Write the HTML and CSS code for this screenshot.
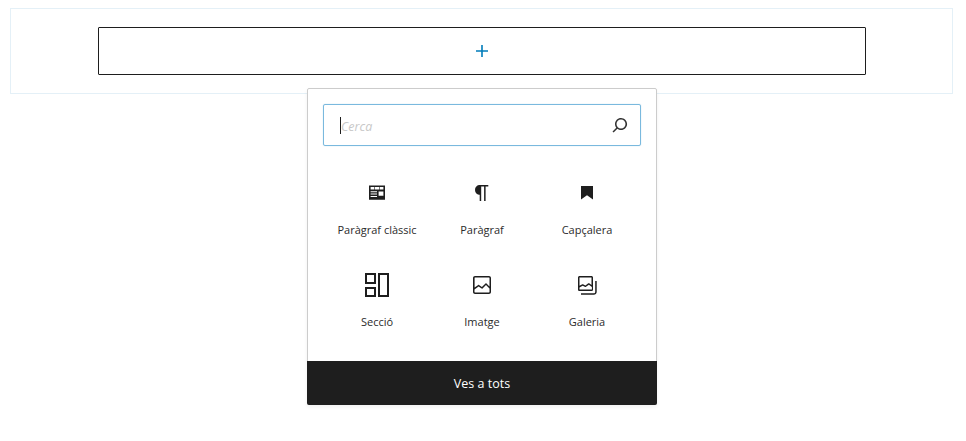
FILE: index.html
```html
<!DOCTYPE html>
<html lang="ca">
<head>
<meta charset="utf-8">
<title>Insereix un bloc</title>
<link rel="stylesheet" href="styles.css">
</head>
<body>
<div class="stage">
  <div class="block-outline">
    <button class="appender" type="button" aria-label="Afegeix un bloc">
      <svg class="icon" viewBox="0 0 24 24" width="24" height="24"><path d="M18 11.2h-5.2V6h-1.6v5.2H6v1.6h5.2V18h1.6v-5.2H18z"/></svg>
    </button>
  </div>
  <div class="popover">
    <div class="search">
      <span class="caret"></span>
      <span class="placeholder">Cerca</span>
      <svg class="icon search-icon" viewBox="0 0 24 24" width="24" height="24"><path d="M13 5c-3.3 0-6 2.7-6 6 0 1.4.5 2.7 1.3 3.7l-3.8 3.8 1.1 1.1 3.8-3.8c1 .8 2.3 1.3 3.7 1.3 3.3 0 6-2.7 6-6S16.3 5 13 5zm0 10.5c-2.5 0-4.5-2-4.5-4.5s2-4.5 4.5-4.5 4.5 2 4.5 4.5-2 4.5-4.5 4.5z"/></svg>
    </div>
    <div class="grid">
      <div class="item">
        <svg class="icon" viewBox="0 0 24 24" width="24" height="24"><path fill-rule="evenodd" d="M4 4.4h16v14.4H4zM5.6 6v2.4h3.8V6zm4.4 0v2.4h4V6zm4.6 0v2.4h3.8V6zM5.6 10.2v1h6.4v-1zm0 2.4v1h6.4v-1zm0 2.4v1h6.4v-1zM13.6 10.4v4.4h4.8v-4.4z"/></svg>
        <span class="label">Paràgraf clàssic</span>
      </div>
      <div class="item">
        <svg class="icon" viewBox="0 0 24 24" width="24" height="24"><path d="M18.3 4H9.9v-.1l-.9.2c-2.3.4-4 2.4-4 4.8s1.7 4.4 4 4.8l.7.1V20h1.5V5.5h2.9V20h1.5V5.5h2.7V4z"/></svg>
        <span class="label">Paràgraf</span>
      </div>
      <div class="item">
        <svg class="icon" viewBox="0 0 24 24" width="24" height="24"><path d="M6 5h12v13.5l-6-4.3-6 4.3z"/></svg>
        <span class="label">Capçalera</span>
      </div>
      <div class="item">
        <svg class="icon" viewBox="0 0 24 24" width="24" height="24"><path fill-rule="evenodd" d="M0 0h11v11H0zM2 2v7h7V2zM0 14h11v10H0zM2 16v6h7v-6zM13 0h11v24H13zM15 2v20h7V2z"/></svg>
        <span class="label">Secció</span>
      </div>
      <div class="item">
        <svg class="icon" viewBox="0 0 24 24" width="24" height="24"><path d="M19 3H5c-1.1 0-2 .9-2 2v14c0 1.1.9 2 2 2h14c1.1 0 2-.9 2-2V5c0-1.1-.9-2-2-2zM5 4.5h14c.3 0 .5.2.5.5v8.4l-3-2.9c-.3-.3-.8-.3-1 0L11.9 14 9 12c-.3-.2-.6-.2-.8 0l-3.6 2.6V5c-.1-.3.1-.5.4-.5zm14 15H5c-.3 0-.5-.2-.5-.5v-2.4l4.1-3 3 1.9c.3.2.7.2.9-.1L16 12l3.5 3.4V19c0 .3-.2.5-.5.5z"/></svg>
        <span class="label">Imatge</span>
      </div>
      <div class="item">
        <svg class="icon" viewBox="0 0 24 24" width="24" height="24"><path fill-rule="evenodd" d="M20.2 8v11c0 .7-.6 1.3-1.3 1.3H6v1.5h12.9c1.5 0 2.8-1.2 2.8-2.8V8zM18 16.4V4.6c0-.9-.7-1.6-1.6-1.6H4.6C3.7 3 3 3.7 3 4.6v11.8c0 .9.7 1.6 1.6 1.6h11.8c.9 0 1.6-.7 1.6-1.6zM4.5 4.6c0-.1.1-.1.1-.1h11.8c.1 0 .1.1.1.1V12l-2.3-1.7c-.3-.2-.6-.2-.9 0l-2.9 2.1L8 11.3c-.2-.1-.5-.1-.7 0l-2.8 1.5zm.1 11.9c-.1 0-.1-.1-.1-.1v-2l3.2-1.7 2.5 1.2c.3.1.6.1.8-.1l2.9-2.1 3 2.2v2.5c0 .1-.1.1-.1.1z"/></svg>
        <span class="label">Galeria</span>
      </div>
    </div>
    <div class="footer">Ves a tots</div>
  </div>
</div>
</body>
</html>
```
FILE: styles.css
```css
html, body {
  margin: 0;
  padding: 0;
  background: #fff;
}

body {
  font-family: "Open Sans", "Noto Sans", "Liberation Sans", sans-serif;
  color: #1e1e1e;
}

.stage {
  position: relative;
  width: 966px;
  height: 441px;
  overflow: hidden;
  padding: 8px 13px 0 10px;
  box-sizing: border-box;
}

.block-outline {
  box-sizing: border-box;
  height: 86px;
  padding: 18px 86px 0 87px;
  border: 1px solid #e4f0f7;
}

.appender {
  display: flex;
  align-items: center;
  justify-content: center;
  box-sizing: border-box;
  width: 100%;
  height: 48px;
  padding: 0 0 1px;
  background: #fff;
  border: 1px solid #1e1e1e;
  border-radius: 1px;
  color: #007cba;
}

.icon {
  display: block;
  fill: currentColor;
}

.popover {
  position: absolute;
  left: 307px;
  top: 88px;
  box-sizing: border-box;
  width: 350px;
  height: 317px;
  display: flex;
  flex-direction: column;
  background: #fff;
  border: 1px solid #ccc;
  border-radius: 2px;
  box-shadow: 0 2px 4px rgba(0, 0, 0, 0.06);
}

.search {
  flex: none;
  display: flex;
  align-items: center;
  box-sizing: border-box;
  height: 42px;
  margin: 15px 15px 0;
  padding: 0 8px 0 16px;
  border: 1px solid #7ab9de;
  border-radius: 2px;
  box-shadow: 0 0 1px rgba(0, 124, 186, 0.4);
}

.caret {
  flex: none;
  width: 1px;
  height: 17px;
  background: #1e1e1e;
}

.placeholder {
  flex: 1;
  padding-top: 2px;
  font-size: 12.5px;
  font-style: italic;
  color: #c8c8c8;
}

.search-icon {
  flex: none;
  color: #333;
}

.grid {
  flex: 1;
  min-height: 0;
  display: grid;
  grid-template-columns: repeat(3, 105px);
  grid-auto-rows: 92px;
  justify-content: center;
  padding-top: 35px;
}

.item {
  display: flex;
  flex-direction: column;
  align-items: center;
}

.label {
  margin-top: 17px;
  font-size: 11px;
  line-height: 16px;
  white-space: nowrap;
  color: #2b2b2b;
}

.footer {
  flex: none;
  height: 44px;
  margin: 0 -1px -1px;
  display: flex;
  align-items: center;
  justify-content: center;
  background: #1e1e1e;
  border-radius: 0 0 2px 2px;
  color: #fff;
  font-size: 12.5px;
}
```
